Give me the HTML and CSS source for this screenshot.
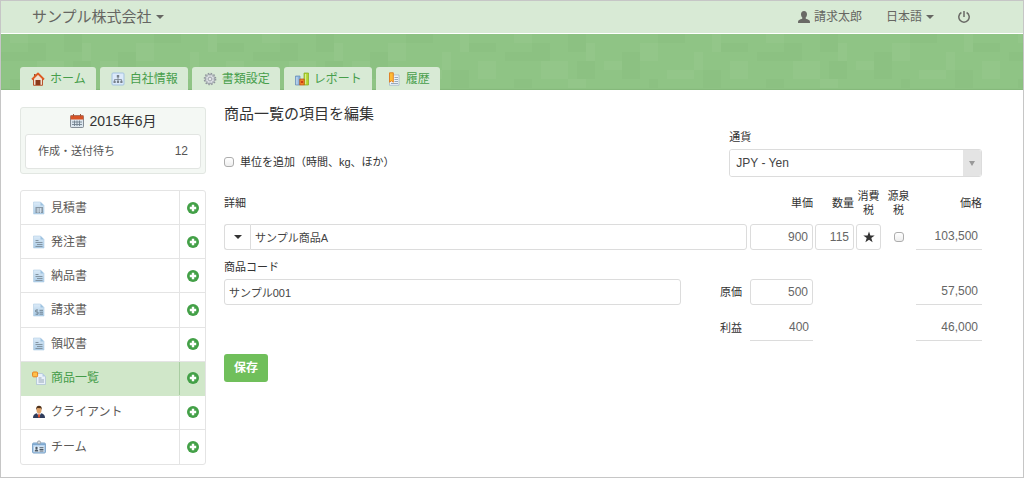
FILE: index.html
```html
<!DOCTYPE html>
<html lang="ja">
<head>
<meta charset="utf-8">
<meta name="viewport" content="width=device-width, initial-scale=1">
<title>商品一覧の項目を編集</title>
<link rel="stylesheet" href="styles.css">
</head>
<body>
<svg class="defs" width="0" height="0" aria-hidden="true">
  <linearGradient id="paper" x1="0" y1="0" x2="0" y2="1"><stop offset="0" stop-color="#dcebf8"/><stop offset="1" stop-color="#a9cae5"/></linearGradient>
  <symbol id="doc" viewBox="0 0 14 14">
    <path d="M1.500 1h7l3.500 3.500V13H1.500z" fill="url(#paper)" stroke="#b0cde4" stroke-width=".6"/>
    <path d="M8.500 1v3.500H12z" fill="#9cc1df"/>
    <path d="M3.500 5.500h3M3.500 7.500h7M5 9.500h5.500M3.500 11.500h7" stroke="#8495a3"/>
  </symbol>
  <symbol id="doc-grid" viewBox="0 0 14 14">
    <path d="M1.500 1h7l3.500 3.500V13H1.500z" fill="url(#paper)" stroke="#b0cde4" stroke-width=".6"/>
    <path d="M8.500 1v3.500H12z" fill="#9cc1df"/>
    <path d="M3.500 6h7.500v6H3.500z" fill="#8797a5"/>
    <path d="M4.500 8h5.500M4.500 10h5.500M6 7v5M8.500 7v5" stroke="#dbe9f4" stroke-width=".8"/>
  </symbol>
  <symbol id="doc-bill" viewBox="0 0 14 14">
    <path d="M1.500 1h7l3.500 3.500V13H1.500z" fill="url(#paper)" stroke="#b0cde4" stroke-width=".6"/>
    <path d="M8.500 1v3.500H12z" fill="#9cc1df"/>
    <path d="M6 7H3.800v2H6v2.200H3.600M7.500 7.300H11M7.500 9.200H11M7.500 11.100H11" fill="none" stroke="#6f8291"/>
  </symbol>
  <symbol id="plus" viewBox="0 0 12 12">
    <circle cx="6" cy="6" r="6" fill="#43a047"/>
    <path d="M4.800 2.800h2.400v2h2v2.400h-2v2H4.800v-2h-2V4.800h2z" fill="#fff"/>
  </symbol>
</svg>

<div class="page">
  <header class="topbar">
    <button class="topbar-item brand" type="button">サンプル株式会社<span class="caret"></span></button>
    <nav class="account" aria-label="アカウント">
      <a class="topbar-item" href="#"><svg class="icon-user" viewBox="0 0 12 12" aria-hidden="true"><path d="M6 0c1.900 0 3 1.300 3 3.200 0 1.400-.6 2.600-1.300 3.300v1.100c.4.500 3.200 1.100 3.900 2 .3.500.4 1.400.4 2.400H0c0-1 .1-1.900.4-2.400.7-.9 3.500-1.500 3.900-2V6.500C3.600 5.800 3 4.600 3 3.200 3 1.300 4.100 0 6 0z" fill="#6a6a66"/></svg>請求太郎</a>
      <button class="topbar-item" type="button">日本語<span class="caret"></span></button>
      <button class="topbar-item" type="button" aria-label="ログアウト"><svg class="icon-power" viewBox="0 0 12 12" aria-hidden="true"><path d="M3.400 1.500a5.200 5.200 0 1 0 5.200 0M6 0v6" fill="none" stroke="#6a6a66" stroke-width="1.500"/></svg></button>
    </nav>
  </header>

  <div class="band">
    <svg class="mosaic" width="100%" height="100%" aria-hidden="true">
      <pattern id="tiles" width="252" height="72" patternUnits="userSpaceOnUse">
        <g fill="#fff" fill-opacity=".03">
          <path d="M9 0h18v9H9zM36 27h27v18H36zM81 9h9v18h-9zM99 27h18v9H99zM135 9h18v18h-18zM162 36h27v9h-27zM207 0h9v18h-9zM225 27h18v18h-18zM63 45h18v9H63zM189 18h9v18h-9z"/>
        </g>
        <g fill="#286b28" fill-opacity=".03">
          <path d="M0 18h27v9H0zM27 9h18v18H27zM63 0h18v18H63zM72 27h18v18H72zM117 18h18v27h-18zM153 0h27v9h-27zM198 36h18v18h-18zM216 9h27v9h-27zM9 45h18v9H9zM144 45h9v9h-9z"/>
        </g>
      </pattern>
      <rect width="100%" height="100%" fill="url(#tiles)"/>
    </svg>
    <nav class="tabs" aria-label="メイン">
      <a class="tab" href="#"><svg class="icon" viewBox="0 0 14 14" aria-hidden="true"><path d="M3 7v6h8V7L7 3z" fill="#f2dfcf"/><path d="M2.500 6.500v6.800h9V6.500" fill="none" stroke="#b9552d"/><path d="M4.500 8h5v5h-5z" fill="#8a3a1a"/><path d="M3 2h1.600v3H3z" fill="#9b4b2b"/><path d="M1 7.500l6-6 6 6" fill="none" stroke="#dd5a22" stroke-width="1.800" stroke-linejoin="round"/></svg>ホーム</a>
      <a class="tab" href="#"><svg class="icon" viewBox="0 0 14 14" aria-hidden="true"><rect x="1" y="1" width="12" height="12" rx="1" fill="#dceafa" stroke="#a3c2df"/><path d="M7 5v4M3.500 9.500V7.500h7v2" fill="none" stroke="#77818b" stroke-width=".8"/><path d="M5.800 3h2.400v2.400H5.800zM2.500 8.800h2.200V11H2.500zM5.900 8.800h2.200V11H5.900zM9.300 8.800h2.200V11H9.300z" fill="#77818b"/></svg>自社情報</a>
      <a class="tab" href="#"><svg class="icon" viewBox="0 0 14 14" aria-hidden="true"><circle cx="7" cy="7" r="5.600" fill="none" stroke="#8f969c" stroke-width="1.500" stroke-dasharray="1.500 1.430"/><circle cx="7" cy="7" r="4.600" fill="#dde1e5" stroke="#a0a6ac" stroke-width="1.200"/><path d="M7 3v8M3 7h8M4.200 4.200l5.600 5.600M9.800 4.200L4.200 9.800" stroke="#aab0b6" stroke-width=".7"/><circle cx="7" cy="7" r="1.500" fill="#fff" stroke="#8f969c" stroke-width=".7"/></svg>書類設定</a>
      <a class="tab" href="#"><svg class="icon" viewBox="0 0 14 14" aria-hidden="true"><path d="M.5 4h4.500v9H.5z" fill="#8eb5dd" stroke="#6289b4" stroke-width=".7"/><path d="M9 1h4.500v12H9z" fill="#b2d82e" stroke="#85a91c" stroke-width=".7"/><path d="M4.800 7h4.400v6H4.800z" fill="#f0832b" stroke="#b94f12" stroke-width=".7"/><path d="M1.300 5h1.200v7.500H1.300zM10 2h1.200v10.300H10z" fill="#fff" opacity=".5"/><path d="M6 9h2v2H6z" fill="#cd3e15"/></svg>レポート</a>
      <a class="tab" href="#"><svg class="icon" viewBox="0 0 14 14" aria-hidden="true"><path d="M2.500 3H12v10.300H2.500z" fill="#edf3f8" stroke="#9fb3c5" stroke-width=".7"/><path d="M7.500 5.500H11M7.500 7.500H11M4 11.500h7M7.500 9.500H11" stroke="#97a9ba"/><path d="M2.500.8h3.800v9.400L4.400 8.800l-1.900 1.400z" fill="#ffbc35" stroke="#df7b1d" stroke-width=".9"/></svg>履歴</a>
    </nav>
  </div>

  <div class="body">
    <aside class="sidebar">
      <section class="month">
        <h2 class="month-title"><svg class="icon" viewBox="0 0 14 14" aria-hidden="true"><rect x=".5" y="1.500" width="13" height="12" rx="1" fill="#dce7ef" stroke="#69747e" stroke-width=".8"/><path d="M.5 1.500h13v4H.5z" fill="#d85325"/><path d="M3.500 0v2.500M10.500 0v2.500" stroke="#a0553b"/><path d="M2 8h10M2 10.500h10M4.500 6.500v5.500M7 6.500v5.500M9.500 6.500v5.500" stroke="#72818e" stroke-width=".9"/></svg>2015年6月</h2>
        <a class="month-row" href="#"><span>作成・送付待ち</span><span class="count">12</span></a>
      </section>
      <ul class="menu">
        <li class="menu-row"><a class="menu-link" href="#"><svg class="icon" aria-hidden="true"><use href="#doc-grid"/></svg>見積書</a><a class="menu-add" href="#" aria-label="見積書を追加"><svg class="icon-plus" aria-hidden="true"><use href="#plus"/></svg></a></li>
        <li class="menu-row"><a class="menu-link" href="#"><svg class="icon" aria-hidden="true"><use href="#doc"/></svg>発注書</a><a class="menu-add" href="#" aria-label="発注書を追加"><svg class="icon-plus" aria-hidden="true"><use href="#plus"/></svg></a></li>
        <li class="menu-row"><a class="menu-link" href="#"><svg class="icon" aria-hidden="true"><use href="#doc"/></svg>納品書</a><a class="menu-add" href="#" aria-label="納品書を追加"><svg class="icon-plus" aria-hidden="true"><use href="#plus"/></svg></a></li>
        <li class="menu-row"><a class="menu-link" href="#"><svg class="icon" aria-hidden="true"><use href="#doc-bill"/></svg>請求書</a><a class="menu-add" href="#" aria-label="請求書を追加"><svg class="icon-plus" aria-hidden="true"><use href="#plus"/></svg></a></li>
        <li class="menu-row"><a class="menu-link" href="#"><svg class="icon" aria-hidden="true"><use href="#doc"/></svg>領収書</a><a class="menu-add" href="#" aria-label="領収書を追加"><svg class="icon-plus" aria-hidden="true"><use href="#plus"/></svg></a></li>
        <li class="menu-row active"><a class="menu-link" href="#" aria-current="page"><svg class="icon" viewBox="0 0 14 14" aria-hidden="true"><path d="M4.500 2.500h6l3 3v8h-9z" fill="#e9f1fa" stroke="#a9bfd6" stroke-width=".7"/><path d="M10.500 2.500v3h3z" fill="#b4cce2"/><path d="M6.500 7h3M6.500 9h5.500M6.500 11h5.500" stroke="#8d9fb0" stroke-width=".9"/><rect x=".6" y="1" width="5" height="4.800" rx="1" fill="#ffc04a" stroke="#e5811e"/></svg>商品一覧</a><a class="menu-add" href="#" aria-label="商品一覧に追加"><svg class="icon-plus" aria-hidden="true"><use href="#plus"/></svg></a></li>
        <li class="menu-row"><a class="menu-link" href="#"><svg class="icon" viewBox="0 0 14 14" aria-hidden="true"><path d="M1 13c0-3 1.500-4.300 4-4.800h4c2.500.5 4 1.800 4 4.800z" fill="#2e3c5c"/><path d="M5 8l2 4.500L9 8z" fill="#fff"/><path d="M6.500 8.500h1l.6 3L7 13l-1.100-1.500z" fill="#d84a2b"/><ellipse cx="7" cy="5" rx="2.500" ry="3.400" fill="#e0a36a"/><path d="M4.300 5C3.800 2 5 .8 7 .8S10.200 2 9.700 5L9 3.200 5.300 3z" fill="#4f3118"/></svg>クライアント</a><a class="menu-add" href="#" aria-label="クライアントを追加"><svg class="icon-plus" aria-hidden="true"><use href="#plus"/></svg></a></li>
        <li class="menu-row"><a class="menu-link" href="#"><svg class="icon" viewBox="0 0 14 14" aria-hidden="true"><rect x=".6" y="3" width="12.800" height="10" rx="1" fill="#b8d5f1" stroke="#6c96bd" stroke-width=".9"/><path d="M1 3.500h12V5H1z" fill="#7fa9d0"/><path d="M2 6.500h10V12H2z" fill="#e3effa"/><circle cx="7" cy="2.500" r="1.600" fill="#d6dde3" stroke="#8b96a0" stroke-width=".8"/><circle cx="4.500" cy="8" r="1.200" fill="#4c5965"/><path d="M2.600 11.500c0-3 3.800-3 3.800 0zM7.500 7.200h4v1h-4zM7.500 9h4v1h-4zM7.500 10.600h4v.8h-4z" fill="#4c5965"/></svg>チーム</a><a class="menu-add" href="#" aria-label="チームを追加"><svg class="icon-plus" aria-hidden="true"><use href="#plus"/></svg></a></li>
      </ul>
    </aside>

    <main class="main">
      <h1 class="title">商品一覧の項目を編集</h1>
      <form>
        <div class="options">
          <label class="unit"><input class="check" type="checkbox">単位を追加（時間、kg、ほか）</label>
          <div class="currency">
            <label for="currency">通貨</label>
            <div class="select-box">
              <select id="currency" class="select"><option>JPY - Yen</option></select>
              <span class="select-arrow"></span>
            </div>
          </div>
        </div>

        <div class="line heads">
          <label for="detail">詳細</label>
          <label class="right" for="price">単価</label>
          <label class="right" for="qty">数量</label>
          <span class="center">消費税</span>
          <label class="center withhold-head" for="withhold">源泉税</label>
          <span class="right">価格</span>
        </div>
        <div class="line">
          <div class="detail">
            <button class="detail-pick" type="button" aria-label="商品を選択"><span class="caret"></span></button>
            <input id="detail" class="field" type="text" value="サンプル商品A">
          </div>
          <input id="price" class="field number" type="text" value="900">
          <input id="qty" class="field number" type="text" value="115">
          <button class="star" type="button" aria-label="消費税"><svg class="icon-star" viewBox="0 0 12 12" aria-hidden="true"><path d="M6 .5l1.400 4H11.700L8.300 7l1.300 4.200L6 8.700l-3.600 2.500L3.700 7 .3 4.500h4.300z" fill="#333"/></svg></button>
          <div class="withhold"><input id="withhold" class="check" type="checkbox"></div>
          <output class="total">103,500</output>
        </div>

        <label class="code-label" for="code">商品コード</label>
        <div class="line">
          <div class="code">
            <input id="code" class="field" type="text" value="サンプル001">
            <label for="cost">原価</label>
          </div>
          <input id="cost" class="field number" type="text" value="500">
          <output class="total last">57,500</output>
        </div>
        <div class="line profit">
          <span class="profit-label">利益</span>
          <output class="total">400</output>
          <output class="total last">46,000</output>
        </div>
        <button class="save" type="submit">保存</button>
      </form>
    </main>
  </div>
</div>
</body>
</html>
```
FILE: styles.css
```css
* { box-sizing: border-box; }

body {
  margin: 0;
  background: #fff;
  color: #333;
  font: 11px/16px "Liberation Sans", "Noto Sans CJK JP", sans-serif;
}

button, input, select {
  margin: 0;
  color: inherit;
  font: inherit;
}

button { cursor: pointer; }

a {
  color: inherit;
  text-decoration: none;
}

.defs { position: absolute; }

.page {
  min-height: 100vh;
  border: 1px solid #c6c6c6;
}

.icon {
  flex: none;
  width: 14px;
  height: 14px;
}

.caret {
  border: 4px solid transparent;
  border-top-color: currentColor;
  border-bottom: 0;
}

/* Top bar */
.topbar {
  display: flex;
  align-items: center;
  justify-content: space-between;
  min-height: 33px;
  padding: 0 53px 0 31px;
  border-bottom: 1px solid #fff;
  background: #d8ead5;
  color: #666662;
}

.topbar-item {
  display: flex;
  align-items: center;
  gap: 4px;
  padding: 0;
  border: 0;
  background: none;
  font-size: 12px;
  line-height: 20px;
}

.brand { font-size: 15px; }

.account {
  display: flex;
  gap: 24px;
}

.icon-user, .icon-power {
  width: 12px;
  height: 12px;
}

/* Green band with tabs */
.band {
  position: relative;
  padding: 33px 19px 0;
  background: #8fc485;
  box-shadow: inset 0 -1px 1px #84b87b;
}

.mosaic {
  position: absolute;
  inset: 0;
}

.tabs {
  position: relative;
  display: flex;
  gap: 4px;
}

.tab {
  display: flex;
  align-items: center;
  gap: 5px;
  height: 23px;
  padding: 0 10px 0 11px;
  border-radius: 3px 3px 0 0;
  background: #d8ead5;
  color: #479e4b;
  font-size: 12px;
}

/* Two columns */
.body {
  display: flex;
  gap: 18px;
  padding: 0 41px 10px 19px;
}

.sidebar {
  flex: none;
  width: 186px;
  padding-top: 17px;
}

.month {
  padding: 4px;
  border: 1px solid #e2e7e2;
  border-radius: 3px;
  background: #f4f8f4;
}

.month-title {
  display: flex;
  align-items: center;
  justify-content: center;
  gap: 6px;
  margin: 0 0 4px;
  font-size: 14px;
  font-weight: 400;
  line-height: 18px;
}

.month-row {
  display: flex;
  align-items: center;
  justify-content: space-between;
  padding: 8px 12px 9px;
  border: 1px solid #e2e5e2;
  border-radius: 3px;
  background: #fff;
  color: #555;
}

.count { font-size: 12px; }

.menu {
  display: grid;
  grid-auto-rows: 1fr;
  min-height: 275px;
  margin: 16px 0 0;
  padding: 0;
  border: 1px solid #e4e4e4;
  border-radius: 3px;
  list-style: none;
}

.menu-row {
  display: flex;
  border-bottom: 1px solid #e4e4e4;
  color: #5c5a58;
  font-size: 12px;
}

.menu-row:last-child { border-bottom: 0; }

.menu-link {
  display: flex;
  flex: 1;
  align-items: center;
  gap: 5px;
  padding-left: 11px;
}

.menu-add {
  display: flex;
  align-items: center;
  justify-content: center;
  width: 26px;
  border-left: 1px solid #e4e4e4;
}

.icon-plus {
  width: 12px;
  height: 12px;
}

.active {
  border-color: #d0e7c9;
  background: #d0e7c9;
  color: #459c49;
}

.active .menu-add { border-color: #a9cda2; }

/* Form */
.main {
  flex: 1;
  min-width: 0;
  padding-top: 13px;
}

.title {
  margin: 0 0 4px;
  font-size: 15px;
  font-weight: 400;
  line-height: 22px;
}

.options {
  display: flex;
  align-items: flex-end;
  justify-content: space-between;
  margin-bottom: 12px;
}

.unit {
  display: flex;
  align-items: center;
  gap: 6px;
  height: 30px;
}

.check {
  appearance: none;
  width: 10px;
  height: 10px;
  border: 1px solid #adadad;
  border-radius: 3px;
  background: linear-gradient(#fff, #eee);
}

.check:checked { background: #43a047; }

.currency {
  display: grid;
  gap: 4px;
  width: 33.333%;
}

.select-box {
  position: relative;
  overflow: hidden;
  border: 1px solid #dcdcdc;
  border-radius: 3px;
}

.select {
  display: block;
  appearance: none;
  width: 100%;
  height: 26px;
  padding: 0 24px 0 6px;
  border: 0;
  background: #fff;
  color: #444;
  font-size: 12px;
}

.select-arrow {
  position: absolute;
  inset: 0 0 0 auto;
  display: grid;
  place-items: center;
  width: 18px;
  background: #e4e4e4;
  pointer-events: none;
}

.select-arrow::before {
  border: 3px solid transparent;
  border-top: 5px solid #999;
  border-bottom: 0;
  content: "";
}

.line {
  display: grid;
  grid-template-columns: minmax(0, 1fr) 63px 39px 25px 31px 66px;
  column-gap: 2px;
  align-items: center;
}

.heads {
  margin-bottom: 7px;
  line-height: 14px;
}

.right { text-align: right; }

.center { text-align: center; }

.withhold-head { padding: 0 4px; }

.field {
  width: 100%;
  min-width: 0;
  height: 26px;
  padding: 0 4px;
  border: 1px solid #dcdcdc;
  border-radius: 3px;
  background: #fff;
  color: #444;
}

.number {
  color: #666;
  font-size: 12px;
  text-align: right;
}

.detail {
  display: flex;
  padding-right: 1px;
}

.detail .field { border-radius: 0 3px 3px 0; }

.detail-pick {
  display: flex;
  flex: none;
  align-items: center;
  justify-content: center;
  width: 26px;
  padding: 0;
  border: 1px solid #dcdcdc;
  border-right: 0;
  border-radius: 3px 0 0 3px;
  background: #fff;
}

.star {
  display: grid;
  place-items: center;
  height: 26px;
  padding: 0;
  border: 1px solid #dcdcdc;
  border-radius: 3px;
  background: #fff;
}

.icon-star {
  width: 12px;
  height: 12px;
}

.withhold {
  display: grid;
  place-items: center;
}

.total {
  height: 26px;
  padding-right: 4px;
  border-bottom: 1px solid #dcdcdc;
  color: #666;
  font-size: 12px;
  line-height: 24px;
  text-align: right;
}

.last { grid-column: 6; }

.code-label {
  display: block;
  margin: 9px 0 4px;
}

.code {
  display: flex;
  align-items: center;
  gap: 39px;
  padding-right: 6px;
}

.code label { flex: none; }

.profit { margin-top: 10px; }

.profit-label {
  padding-right: 6px;
  text-align: right;
}

.save {
  height: 28px;
  margin-top: 13px;
  padding: 0 10px;
  border: 0;
  border-radius: 3px;
  background: #70bf5b;
  color: #fff;
  font-size: 12px;
  font-weight: 700;
}
```
